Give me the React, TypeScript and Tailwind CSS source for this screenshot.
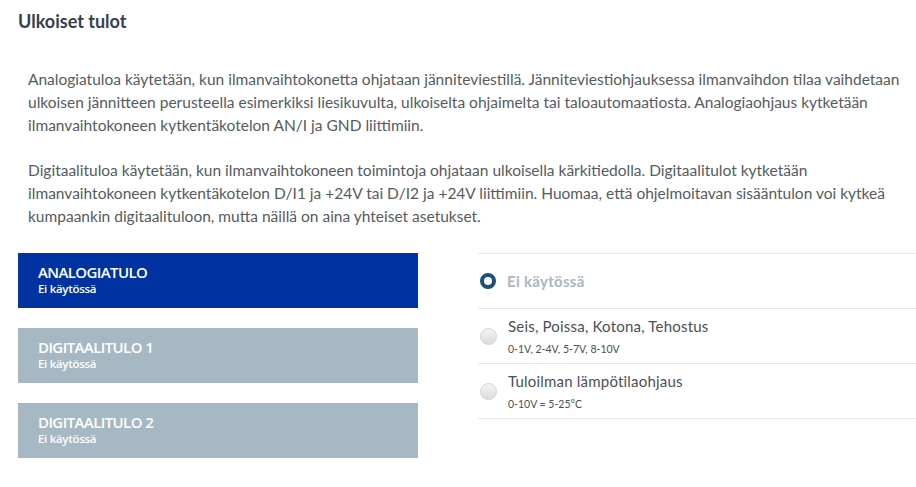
import React, { useState } from 'react';

const inputs = [
  { id: 'an', label: 'ANALOGIATULO', status: 'Ei käytössä' },
  { id: 'd1', label: 'DIGITAALITULO 1', status: 'Ei käytössä' },
  { id: 'd2', label: 'DIGITAALITULO 2', status: 'Ei käytössä' },
];

const options = [
  { id: 'off', title: 'Ei käytössä', sub: '' },
  { id: 'modes', title: 'Seis, Poissa, Kotona, Tehostus', sub: '0-1V, 2-4V, 5-7V, 8-10V' },
  { id: 'temp', title: 'Tuloilman lämpötilaohjaus', sub: '0-10V = 5-25°C' },
];

export default function App() {
  const [active, setActive] = useState('an');
  const [choice, setChoice] = useState('off');

  return (
    <div className="w-[916px] h-[487px] bg-white overflow-hidden font-['Lato','Liberation_Sans',sans-serif]">
      <h1 className="pl-[18px] pt-[10px] text-[18px] font-bold text-[#36404f] leading-[22px]">Ulkoiset tulot</h1>

      {/* intro text, lines broken as in the original */}
      <div className="pl-[28px] pt-[36px] text-[15.5px] leading-[23px] text-[#555b61] whitespace-nowrap">
        <p>
          Analogiatuloa käytetään, kun ilmanvaihtokonetta ohjataan jänniteviestillä. Jänniteviestiohjauksessa ilmanvaihdon tilaa vaihdetaan
          <br />
          ulkoisen jännitteen perusteella esimerkiksi liesikuvulta, ulkoiselta ohjaimelta tai taloautomaatiosta. Analogiaohjaus kytketään
          <br />
          ilmanvaihtokoneen kytkentäkotelon AN/I ja GND liittimiin.
        </p>
        <p className="mt-[22px]">
          Digitaalituloa käytetään, kun ilmanvaihtokoneen toimintoja ohjataan ulkoisella kärkitiedolla. Digitaalitulot kytketään
          <br />
          ilmanvaihtokoneen kytkentäkotelon D/I1 ja +24V tai D/I2 ja +24V liittimiin. Huomaa, että ohjelmoitavan sisääntulon voi kytkeä
          <br />
          kumpaankin digitaalituloon, mutta näillä on aina yhteiset asetukset.
        </p>
      </div>

      <div className="flex pl-[18px] pt-[25px] gap-[60px]">
        <div className="flex flex-col gap-[20px] w-[400px]">
          {inputs.map((it) => (
            <button
              key={it.id}
              onClick={() => setActive(it.id)}
              className={`h-[55px] px-[20px] pb-[2px] flex flex-col justify-center text-left text-white font-['Open_Sans','DejaVu_Sans',sans-serif] ${
                active === it.id ? 'bg-[#0033a1]' : 'bg-[#a6b8c3]'
              }`}
            >
              <span className="text-[15px] leading-[17px] font-semibold tracking-[-0.6px]">{it.label}</span>
              <span className="mt-[1px] text-[11.5px] leading-[13px] font-semibold tracking-[-0.3px]">{it.status}</span>
            </button>
          ))}
        </div>

        <div className="flex-1 border-t border-[#e8e8e8]">
          {options.map((o) => {
            const sel = choice === o.id;
            return (
              <label
                key={o.id}
                onClick={() => setChoice(o.id)}
                className="h-[55px] flex items-center border-b border-[#e8e8e8] pl-[2px] cursor-pointer"
              >
                {sel ? (
                  <span className="w-[16px] h-[16px] rounded-full border-[4px] border-[#1b4f7c] bg-white shrink-0" />
                ) : (
                  <span className="w-[17px] h-[17px] rounded-full border border-[#d4d4d4] bg-gradient-to-b from-[#f4f4f4] to-[#dcdcdc] shrink-0 mt-[19px] self-start" />
                )}
                <span className="ml-[11px] flex flex-col">
                  {sel ? (
                    <span className="text-[15px] font-bold text-[#a9b7c1] leading-[20px] tracking-[0.3px]">{o.title}</span>
                  ) : (
                    <>
                      <span className="text-[15px] text-[#4a5058] leading-[20px] tracking-[0.2px]">{o.title}</span>
                      <span className="text-[10.5px] text-[#4a5058] leading-[14px] mt-[6px]">{o.sub}</span>
                    </>
                  )}
                </span>
              </label>
            );
          })}
        </div>
      </div>
    </div>
  );
}
